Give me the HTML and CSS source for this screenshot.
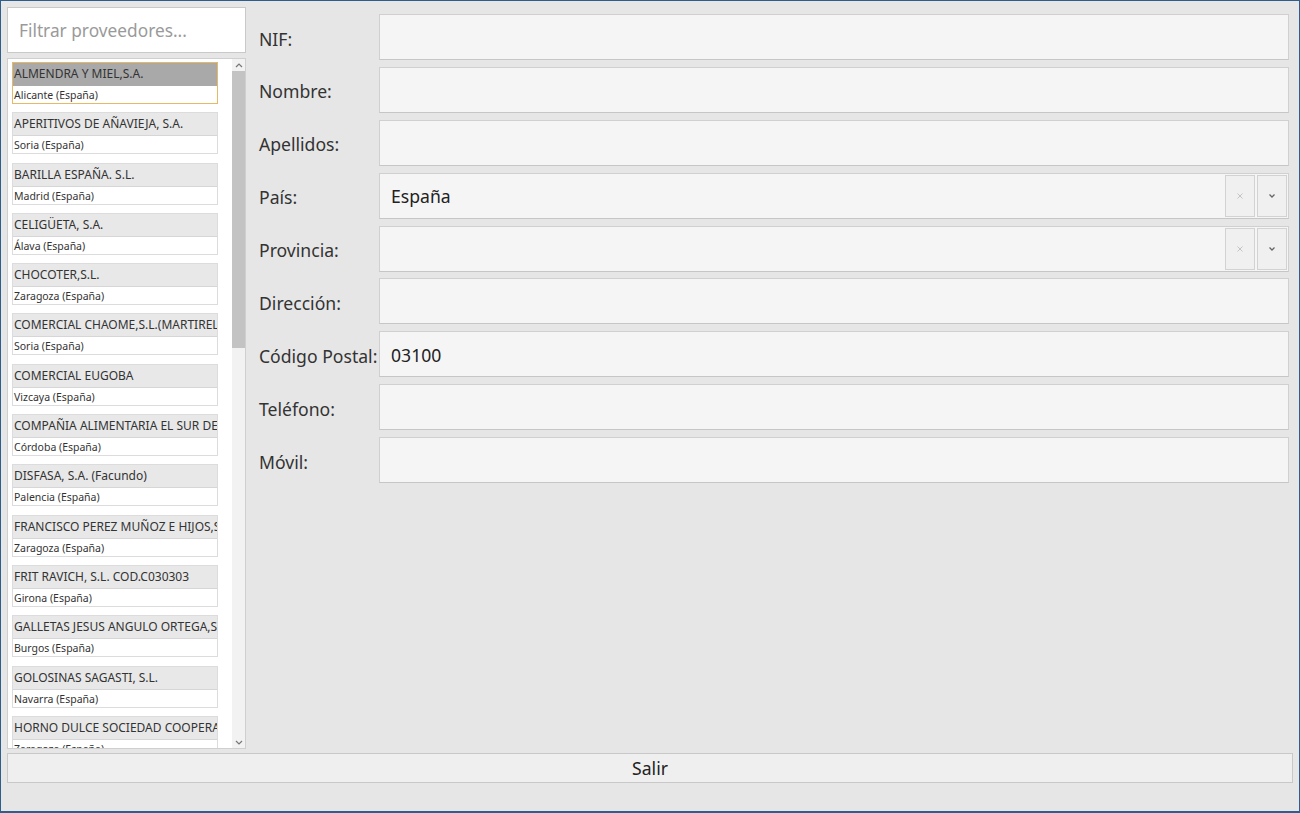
FILE: index.html
```html
<!DOCTYPE html>
<html lang="es">
<head>
  <meta charset="UTF-8" />
  <title>Proveedores</title>
  <link rel="stylesheet" href="styles.css">
</head>
<body>

<div class="window">
  <div class="main">
    <div class="side">
      <input class="filter" type="text" placeholder="Filtrar proveedores..." />
      <div class="list">
        <div class="items">
          <div class="item selected"><div class="name">ALMENDRA Y MIEL,S.A.</div><div class="place">Alicante (España)</div></div>
          <div class="item"><div class="name">APERITIVOS DE AÑAVIEJA, S.A.</div><div class="place">Soria (España)</div></div>
          <div class="item"><div class="name">BARILLA ESPAÑA. S.L.</div><div class="place">Madrid (España)</div></div>
          <div class="item"><div class="name">CELIGÜETA, S.A.</div><div class="place">Álava (España)</div></div>
          <div class="item"><div class="name">CHOCOTER,S.L.</div><div class="place">Zaragoza (España)</div></div>
          <div class="item"><div class="name">COMERCIAL CHAOME,S.L.(MARTIRELO)</div><div class="place">Soria (España)</div></div>
          <div class="item"><div class="name">COMERCIAL EUGOBA</div><div class="place">Vizcaya (España)</div></div>
          <div class="item"><div class="name">COMPAÑIA ALIMENTARIA EL SUR DE ESPAÑA</div><div class="place">Córdoba (España)</div></div>
          <div class="item"><div class="name">DISFASA, S.A. (Facundo)</div><div class="place">Palencia (España)</div></div>
          <div class="item"><div class="name">FRANCISCO PEREZ MUÑOZ E HIJOS,S.L.</div><div class="place">Zaragoza (España)</div></div>
          <div class="item"><div class="name">FRIT RAVICH, S.L. COD.C030303</div><div class="place">Girona (España)</div></div>
          <div class="item"><div class="name">GALLETAS JESUS ANGULO ORTEGA,S.L.</div><div class="place">Burgos (España)</div></div>
          <div class="item"><div class="name">GOLOSINAS SAGASTI, S.L.</div><div class="place">Navarra (España)</div></div>
          <div class="item"><div class="name">HORNO DULCE SOCIEDAD COOPERATIVA</div><div class="place">Zaragoza (España)</div></div>
        </div>
        <div class="scrollbar">
          <div class="arrow">
            <svg width="8" height="5" viewBox="0 0 8 5"><path d="M1 4 L4 1 L7 4" fill="none" stroke="#777" stroke-width="1.2"/></svg>
          </div>
          <div class="thumb"></div>
          <div class="track"></div>
          <div class="arrow">
            <svg width="8" height="5" viewBox="0 0 8 5"><path d="M1 1 L4 4 L7 1" fill="none" stroke="#777" stroke-width="1.2"/></svg>
          </div>
        </div>
      </div>
    </div>

    <div class="form">
      <div class="row"><label>NIF:</label><div class="field"></div></div>
      <div class="row"><label>Nombre:</label><div class="field"></div></div>
      <div class="row"><label>Apellidos:</label><div class="field"></div></div>
      <div class="row">
        <label>País:</label>
        <div class="field combo">
          <span class="value">España</span>
          <span class="btn"><svg width="8" height="8" viewBox="0 0 8 8"><path d="M1.5 1.5 L6.5 6.5 M6.5 1.5 L1.5 6.5" stroke="#c4c4c4" stroke-width="1"/></svg></span>
          <span class="btn"><svg width="8" height="6" viewBox="0 0 8 6"><path d="M1.5 1.5 L4 4 L6.5 1.5" fill="none" stroke="#666" stroke-width="1.3"/></svg></span>
        </div>
      </div>
      <div class="row">
        <label>Provincia:</label>
        <div class="field combo">
          <span class="value"></span>
          <span class="btn"><svg width="8" height="8" viewBox="0 0 8 8"><path d="M1.5 1.5 L6.5 6.5 M6.5 1.5 L1.5 6.5" stroke="#c4c4c4" stroke-width="1"/></svg></span>
          <span class="btn"><svg width="8" height="6" viewBox="0 0 8 6"><path d="M1.5 1.5 L4 4 L6.5 1.5" fill="none" stroke="#666" stroke-width="1.3"/></svg></span>
        </div>
      </div>
      <div class="row"><label>Dirección:</label><div class="field"></div></div>
      <div class="row"><label>Código Postal:</label><div class="field">03100</div></div>
      <div class="row"><label>Teléfono:</label><div class="field"></div></div>
      <div class="row"><label>Móvil:</label><div class="field"></div></div>
    </div>
  </div>

  <button class="exit">Salir</button>
</div>

</body>
</html>
```

FILE: styles.css
```css
body { margin: 0; padding: 0; font-family: "Noto Sans", "Open Sans", sans-serif; color: #333; }
.window { width: 1300px; height: 813px; box-sizing: border-box; background: #e6e6e6; border: 1px solid #2e5f8c; border-bottom-width: 2px; padding: 6px 6px 0 6px; display: flex; flex-direction: column; }
.main { display: flex; height: 742px; }

.side { width: 239px; display: flex; flex-direction: column; gap: 5px; }
.filter { height: 46px; box-sizing: border-box; border: 1px solid #c9c9c9; background: #fff; padding: 0 11px; font-family: inherit; font-size: 17.3px; color: #333; outline: none; }
.filter::placeholder { color: #9a9a9a; }
.list { flex: 1; min-height: 0; background: #fff; border: 1px solid #cfcfcf; display: flex; overflow: hidden; }
.items { flex: 1; overflow: hidden; padding: 3px 0 0 4px; }
.item { width: 206px; height: 42px; box-sizing: border-box; margin-bottom: 8.3px; border: 1px solid #dcdcdc; display: flex; flex-direction: column; }
.item .name { height: 23px; box-sizing: border-box; padding: 1px 0 0 1px; background: #e8e8e8; border-bottom: 1px solid #d6d6d6; font-size: 12px; line-height: 19px; color: #333; white-space: nowrap; overflow: hidden; }
.item .place { flex: 1; padding: 0 0 0 1px; font-size: 10.5px; line-height: 18px; color: #333; white-space: nowrap; overflow: hidden; }
.item.selected { border-color: #e7b866; }
.item.selected .name { background: #a9a9a9; border-bottom-color: #a9a9a9; }

.scrollbar { width: 13px; display: flex; flex-direction: column; background: #f2f2f2; }
.scrollbar .arrow { height: 12px; display: flex; align-items: center; justify-content: center; }
.scrollbar .thumb { height: 277px; background: #c3c3c3; }
.scrollbar .track { flex: 1; }

.form { flex: 1; padding: 7px 4px 0 13px; display: flex; flex-direction: column; gap: 6.9px; }
.row { display: flex; align-items: center; height: 46px; }
.row label { width: 120px; padding-top: 3px; font-size: 17.6px; color: #333; white-space: nowrap; }
.field { flex: 1; height: 46px; box-sizing: border-box; background: #f5f5f5; border: 1px solid #d0d0d0; border-bottom-color: #c6c6c6; padding: 1px 11px 0; font-size: 17.6px; color: #222; display: flex; align-items: center; }
.combo { padding-right: 1px; }
.combo .value { flex: 1; }
.combo .btn { width: 30px; height: 42px; box-sizing: border-box; margin-left: 2px; background: #f0f0f0; border: 1px solid #d2d2d2; display: flex; align-items: center; justify-content: center; }

.exit { margin-top: 4px; height: 30px; width: 1286px; background: #efefef; border: 1px solid #c8c8c8; font-family: inherit; font-size: 17.6px; color: #222; padding: 0; }
```
